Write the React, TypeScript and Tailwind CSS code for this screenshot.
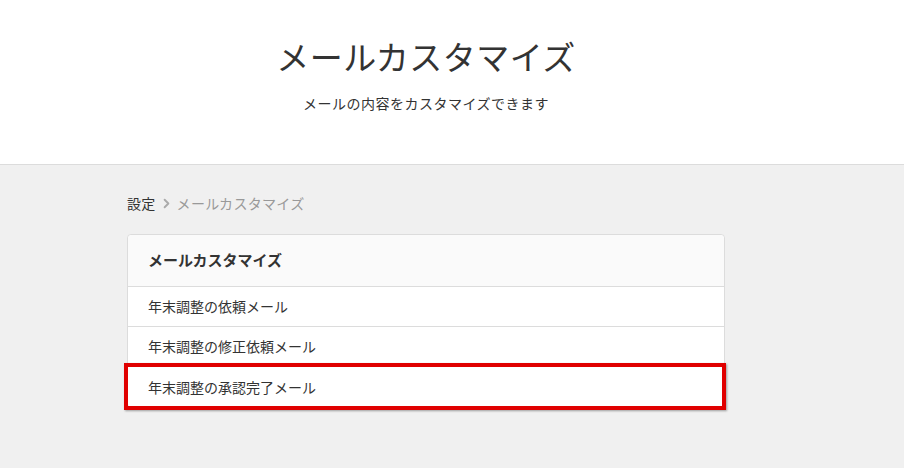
import { ChevronRight } from 'lucide-react';

const items = ['年末調整の依頼メール', '年末調整の修正依頼メール', '年末調整の承認完了メール'];

export default function App() {
  return (
    <div
      className="min-h-[468px] bg-[#f0f0f0] text-[#333]"
      style={{ fontFamily: '"Noto Sans CJK JP", "Noto Sans", sans-serif' }}
    >
      {/* Page header */}
      <div className="h-[165px] bg-white border-b border-[#dcdcdc]">
        <div className="ml-[127px] w-[598px] pt-[32px] flex flex-col items-center">
          <h1 className="text-[33px] leading-[48px] font-normal tracking-[0.5px] text-[#333]">
            メールカスタマイズ
          </h1>
          <p className="mt-[13px] text-[14px] leading-[20px] tracking-[0.5px] text-[#333]">
            メールの内容をカスタマイズできます
          </p>
        </div>
      </div>

      <div className="ml-[127px] w-[598px] pt-[27px]">
        {/* Breadcrumb */}
        <div className="flex items-center text-[14px] leading-[22px] tracking-[0.3px]">
          <span className="text-[#333]">設定</span>
          <ChevronRight className="h-[15px] w-[15px] mx-[3px] text-[#aaa]" strokeWidth={3} />
          <span className="text-[#999]">メールカスタマイズ</span>
        </div>

        {/* Card */}
        <div className="mt-[20px] bg-white border border-[#dcdcdc] rounded-[4px]">
          <div className="h-[52px] bg-[#fafafa] border-b border-[#dcdcdc] rounded-t-[4px] px-[20px] flex items-center">
            <span className="text-[15px] font-bold text-[#333]">メールカスタマイズ</span>
          </div>
          {items.map((label, i) => (
            <div
              key={label}
              className={`relative h-[40px] px-[20px] flex items-center text-[14px] text-[#333] ${
                i < items.length - 1 ? 'border-b border-[#dcdcdc]' : ''
              }`}
            >
              {label}
              {i === items.length - 1 && (
                <div className="absolute left-[-4px] right-[-2px] top-[-4px] bottom-[-3px] border-[4px] border-[#e00000] shadow-[1px_1px_2px_rgba(0,0,0,0.35)]" />
              )}
            </div>
          ))}
        </div>
      </div>
    </div>
  );
}
